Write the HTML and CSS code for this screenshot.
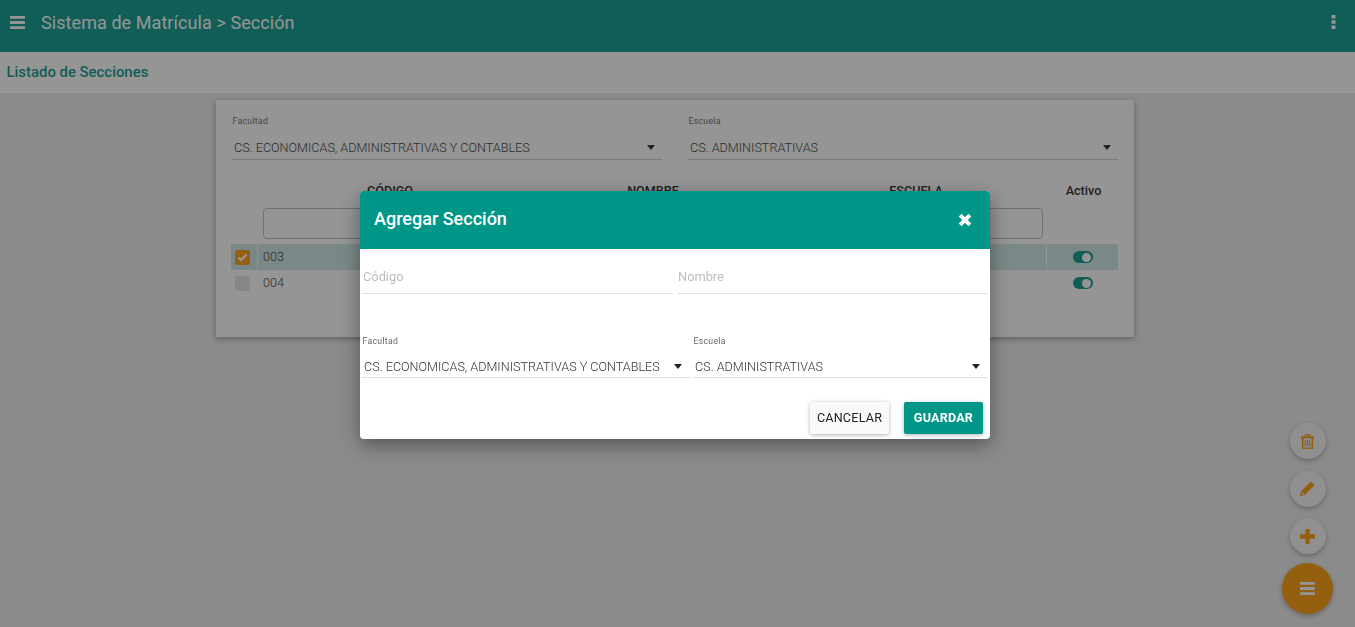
FILE: index.html
```html
<!DOCTYPE html>
<html lang="es">

<head>
  <meta charset="UTF-8">
  <meta name="viewport" content="width=device-width, initial-scale=1.0">
  <title>Sistema de Matrícula</title>
  <link rel="stylesheet" href="styles.css">
</head>

<body>
  <header class="topbar">
    <svg class="menu-icon" viewBox="0 0 16 14"><path d="M0 0h16v3H0zM0 5.500h16v3H0zM0 11h16v3H0z"/></svg>
    <span class="topbar-title">Sistema de Matrícula &gt; Sección</span>
    <svg class="dots-icon" viewBox="0 0 4 14"><path d="M0 0h4v3.500H0zM0 5.250h4v3.500H0zM0 10.500h4V14H0z"/></svg>
  </header>

  <div class="subheader">Listado de Secciones</div>

  <main class="content">
    <section class="card">
      <div class="filters">
        <div class="field">
          <label class="field-label">Facultad</label>
          <div class="select-box"><span>CS. ECONOMICAS, ADMINISTRATIVAS Y CONTABLES</span><i class="caret"></i></div>
        </div>
        <div class="field">
          <label class="field-label">Escuela</label>
          <div class="select-box"><span>CS. ADMINISTRATIVAS</span><i class="caret"></i></div>
        </div>
      </div>

      <table class="sections-table">
        <thead>
          <tr>
            <th class="col-check"></th>
            <th>CÓDIGO</th>
            <th>NOMBRE</th>
            <th>ESCUELA</th>
            <th class="col-active">Activo</th>
          </tr>
          <tr class="filter-row">
            <th></th>
            <th><input type="text"></th>
            <th><input type="text"></th>
            <th><input type="text"></th>
            <th></th>
          </tr>
        </thead>
        <tbody>
          <tr class="selected">
            <td class="col-check">
              <span class="checkbox checked">
                <svg viewBox="0 0 12 10"><path d="M1.500 5l3 3 6-6.500" fill="none" stroke="#fff" stroke-width="2.500"/></svg>
              </span>
            </td>
            <td>003</td>
            <td></td>
            <td></td>
            <td class="col-active"><span class="toggle"></span></td>
          </tr>
          <tr>
            <td class="col-check"><span class="checkbox"></span></td>
            <td>004</td>
            <td></td>
            <td></td>
            <td class="col-active"><span class="toggle"></span></td>
          </tr>
        </tbody>
      </table>
    </section>
  </main>

  <!-- Floating action buttons -->
  <div class="fab-stack">
    <button class="fab">
      <svg viewBox="0 0 14 16"><path d="M4.500 0h5l1 2.500H14v2h-1V16H1V4.500H0v-2h3.500zM5.600 1.500L5.200 2.500h3.600l-.4-1zM2.800 4.500v9.800h8.400V4.500zM4 6h1.400v7H4zM6.300 6h1.400v7H6.300zM8.600 6H10v7H8.600z" fill-rule="evenodd"/></svg>
    </button>
    <button class="fab">
      <svg viewBox="0 0 16 16"><path d="M11.500.500l4 4L5 15l-5 1 1-5zM2.500 11.500l-.7 2.700 2 .0.500-.5z" fill-rule="evenodd"/></svg>
    </button>
    <button class="fab">
      <svg viewBox="0 0 14 14"><path d="M5 0h4v5h5v4H9v5H5V9H0V5h5z"/></svg>
    </button>
    <button class="fab fab-main">
      <svg viewBox="0 0 16 14"><path d="M0 0h16v3H0zM0 5.500h16v3H0zM0 11h16v3H0z"/></svg>
    </button>
  </div>

  <div class="overlay">
    <div class="modal">
      <div class="modal-header">
        <h2>Agregar Sección</h2>
        <svg class="close-icon" viewBox="0 0 12 12"><path d="M1.800 1.800l8.400 8.400M10.200 1.800l-8.400 8.400" fill="none" stroke="#fff" stroke-width="3.400"/></svg>
      </div>
      <div class="modal-body">
        <div class="input-row">
          <input class="text-input" type="text" placeholder="Código">
          <input class="text-input" type="text" placeholder="Nombre">
        </div>
        <div class="select-row">
          <div class="field">
            <label class="field-label">Facultad</label>
            <div class="select-box"><span>CS. ECONOMICAS, ADMINISTRATIVAS Y CONTABLES</span><i class="caret"></i></div>
          </div>
          <div class="field">
            <label class="field-label">Escuela</label>
            <div class="select-box"><span>CS. ADMINISTRATIVAS</span><i class="caret"></i></div>
          </div>
        </div>
        <div class="modal-actions">
          <button class="btn">CANCELAR</button>
          <button class="btn btn-primary">GUARDAR</button>
        </div>
      </div>
    </div>
  </div>
</body>

</html>
```

FILE: styles.css
```css
* {
  box-sizing: border-box;
}

html,
body {
  height: 100%;
}

body {
  font-family: 'Roboto', sans-serif;
  margin: 0;
  background: #ececec;
  color: #333;
  overflow: hidden;
}

/* Top bar */
.topbar {
  display: flex;
  align-items: center;
  height: 52px;
  padding: 0 18px 8px 10px;
  background: #009688;
  color: #fff;
}

.menu-icon {
  width: 15px;
  height: 13px;
  fill: #fff;
  margin-right: 16px;
}

.topbar-title {
  font-size: 18px;
  letter-spacing: 0.07px;
}

.dots-icon {
  width: 5px;
  height: 14px;
  fill: #fff;
  margin-left: auto;
  margin-right: 1px;
}

.subheader {
  height: 41px;
  padding: 11px 6.500px 0;
  background: #fff;
  color: #009688;
  font-size: 14.900px;
  font-weight: 500;
}

/* Card with the list */
.content {
  padding: 7px 221px 0 216px;
}

.card {
  height: 237px;
  padding: 16px 16px 0;
  background: #fff;
  box-shadow: 0 2px 6px rgba(0, 0, 0, 0.35);
}

.filters {
  display: grid;
  grid-template-columns: 430px 430px;
  column-gap: 26px;
}

.field-label {
  display: block;
  height: 15px;
  font-size: 8.700px;
  letter-spacing: 0.3px;
  color: #666;
  padding-left: 0.500px;
}

.select-box {
  display: flex;
  align-items: center;
  justify-content: space-between;
  height: 29px;
  padding: 5px 7px 0 2px;
  border-bottom: 1px solid #d0d0d0;
  font-size: 12.600px;
  font-weight: 300;
  color: #333;
  white-space: nowrap;
}

.caret {
  width: 0;
  height: 0;
  border-left: 4.500px solid transparent;
  border-right: 4.500px solid transparent;
  border-top: 5px solid #222;
  flex: none;
}

.sections-table {
  width: 889px;
  margin: 18px 0 0 -2px;
  table-layout: fixed;
  border-collapse: separate;
  border-spacing: 1px 0;
  font-size: 12.600px;
}

.sections-table th {
  height: 25px;
  padding: 0 0 0 2px;
  font-weight: 500;
  color: #222;
}

.sections-table .filter-row th {
  height: 41px;
  padding: 5px 3px 5px 5px;
}

.filter-row input {
  display: block;
  width: 100%;
  height: 31px;
  border: 1px solid #bbb;
  border-radius: 4px;
  background: #fff;
}

.sections-table td {
  height: 26px;
  padding: 0 5px 2px;
  font-weight: 300;
  color: #333;
}

.selected td {
  background: #cce9e5;
}

.col-check {
  width: 26px;
}

.sections-table .col-check {
  padding: 0 4px;
}

.sections-table .col-active {
  width: 71px;
  padding-bottom: 0;
  text-align: center;
}

.checkbox {
  display: block;
  width: 15px;
  height: 15px;
  border-radius: 2px;
  background: #e3e5e8;
}

.checkbox svg {
  display: block;
  width: 11px;
  height: 9px;
  margin: 0 2px;
}

.checkbox.checked {
  background: #ff9800;
  padding-top: 3px;
}

.toggle {
  position: relative;
  display: block;
  width: 20px;
  height: 12px;
  margin: 0 auto;
  border-radius: 6px;
  background: #009688;
}

.toggle::after {
  content: '';
  position: absolute;
  top: 1.500px;
  right: 1.500px;
  width: 9px;
  height: 9px;
  border-radius: 50%;
  background: #fff;
}

/* Floating buttons */
.fab-stack {
  position: fixed;
  right: 22px;
  bottom: 13px;
  display: flex;
  flex-direction: column;
  align-items: center;
  width: 51px;
}

.fab {
  display: flex;
  align-items: center;
  justify-content: center;
  width: 36px;
  height: 36px;
  margin-bottom: 11.500px;
  padding: 0;
  border: none;
  border-radius: 50%;
  background: #f5f5f5;
  box-shadow: 0 2px 5px rgba(0, 0, 0, 0.3);
}

.fab svg {
  width: 15px;
  height: 15px;
  fill: #ff9800;
}

.fab-main {
  width: 51px;
  height: 51px;
  margin-bottom: 0;
  margin-top: -2.500px;
  background: #ff9800;
}

.fab-main svg {
  width: 15px;
  height: 13px;
  fill: #fff;
}

/* Dialog */
.overlay {
  position: fixed;
  inset: 0;
  padding: 191px 0 0 360px;
  background: rgba(33, 33, 33, 0.48);
}

.modal {
  width: 630px;
  height: 248px;
  border-radius: 4px;
  overflow: hidden;
  background: #fff;
  box-shadow: 0 6px 20px rgba(0, 0, 0, 0.4);
}

.modal-header {
  display: flex;
  align-items: center;
  justify-content: space-between;
  height: 58px;
  padding: 0 18px 0 14px;
  background: #009688;
  color: #fff;
}

.modal-header h2 {
  margin: 0 0 4px;
  font-size: 18px;
  font-weight: 500;
}

.close-icon {
  width: 14px;
  height: 14px;
  margin-top: -1px;
}

.modal-body {
  padding: 0 2px;
}

.input-row {
  display: grid;
  grid-template-columns: 311px 311px;
  column-gap: 4px;
  padding-top: 11px;
}

.text-input {
  height: 34px;
  padding: 0 1px;
  border: none;
  border-bottom: 1px solid #e0e0e0;
  font-family: inherit;
  font-size: 12.800px;
  outline: none;
}

.text-input::placeholder {
  color: #bdbdbd;
}

.select-row {
  display: grid;
  grid-template-columns: 328px 295px;
  column-gap: 3px;
  padding-top: 42px;
}

.select-row .select-box {
  height: 27px;
  padding-top: 4px;
  padding-right: 8px;
  border-bottom-color: #e0e0e0;
}

.modal-actions {
  display: flex;
  justify-content: flex-end;
  gap: 15px;
  padding: 24px 5px 0 0;
}

.btn {
  width: 79px;
  height: 32px;
  padding: 0 0 2px;
  border: none;
  border-radius: 2px;
  background: #fafafa;
  color: #222;
  font-family: inherit;
  font-size: 12.600px;
  font-weight: 400;
  letter-spacing: 0.2px;
  box-shadow: 0 1px 4px rgba(0, 0, 0, 0.3);
}

.btn-primary {
  background: #009688;
  color: #fff;
  font-weight: 700;
}
```
